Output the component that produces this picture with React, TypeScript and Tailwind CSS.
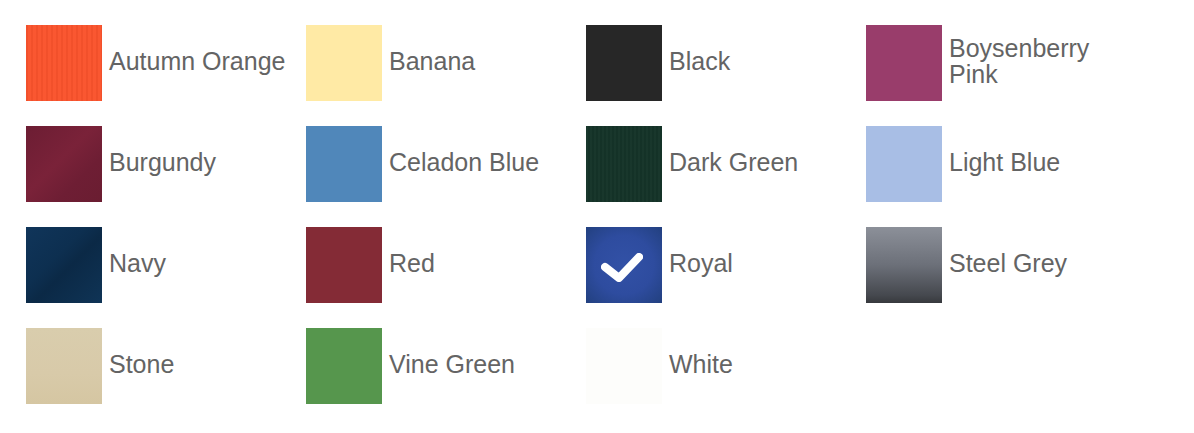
import React from 'react';

type Swatch = {
  name: string;
  swatch: string;
  selected?: boolean;
};

// 色見本: 画像の代わりに色とグラデーションで質感を出す
const colors: Swatch[] = [
  {
    name: 'Autumn Orange',
    swatch:
      'bg-[#fa532c] bg-[repeating-linear-gradient(90deg,rgba(0,0,0,0.03)_0px,rgba(0,0,0,0.03)_2px,rgba(255,255,255,0.025)_2px,rgba(255,255,255,0.025)_5px)]',
  },
  { name: 'Banana', swatch: 'bg-[#ffeaa5]' },
  { name: 'Black', swatch: 'bg-[#272727]' },
  { name: 'Boysenberry Pink', swatch: 'bg-[#993d6b]' },
  {
    name: 'Burgundy',
    swatch: 'bg-[linear-gradient(135deg,#6c1d33_0%,#7a2239_45%,#6e1e34_70%,#6a1d31_100%)]',
  },
  { name: 'Celadon Blue', swatch: 'bg-[#5087ba]' },
  {
    name: 'Dark Green',
    swatch:
      'bg-[#153429] bg-[repeating-linear-gradient(90deg,rgba(255,255,255,0.015)_0px,rgba(255,255,255,0.015)_2px,rgba(0,0,0,0.04)_2px,rgba(0,0,0,0.04)_4px)]',
  },
  { name: 'Light Blue', swatch: 'bg-[#a8bee5]' },
  {
    name: 'Navy',
    swatch: 'bg-[linear-gradient(135deg,#10355a_0%,#0d2f50_40%,#0b2946_55%,#0f3456_100%)]',
  },
  { name: 'Red', swatch: 'bg-[#842b36]' },
  {
    name: 'Royal',
    swatch:
      'bg-[radial-gradient(ellipse_at_center,#3251a6_0%,#2e4c9f_55%,#22407f_100%)]',
    selected: true,
  },
  {
    name: 'Steel Grey',
    swatch: 'bg-[linear-gradient(180deg,#8c9099_0%,#6c7079_50%,#45484e_90%,#37393d_100%)]',
  },
  {
    name: 'Stone',
    swatch: 'bg-[linear-gradient(180deg,#d9cdad_0%,#d8caa9_60%,#d5c6a2_100%)]',
  },
  { name: 'Vine Green', swatch: 'bg-[#56964d]' },
  { name: 'White', swatch: 'bg-[#fdfdfb]' },
];

function CheckMark() {
  return (
    <svg className="absolute inset-0" width="76" height="76" viewBox="0 0 76 76">
      <polyline
        points="19,40 33,51 53,30"
        fill="none"
        stroke="#ffffff"
        strokeWidth="8"
        strokeLinecap="round"
        strokeLinejoin="round"
        style={{ filter: 'blur(0.7px)' }}
      />
    </svg>
  );
}

function ColorOption({ color }: { color: Swatch }) {
  return (
    <div className="flex h-[101px] items-start">
      <div className="flex items-center">
        <div className={`relative h-[76px] w-[76px] shrink-0 ${color.swatch}`}>
          {color.selected && <CheckMark />}
        </div>
        <span className="ml-[7px] w-[185px] pb-[5px] text-[25px] leading-[26px] text-[#646464]">
          {color.name}
        </span>
      </div>
    </div>
  );
}

export default function App() {
  return (
    <div className="h-[433px] w-[1194px] bg-white pl-[26px] pt-[25px] font-['Liberation_Sans',Arial,sans-serif]">
      <div className="grid grid-cols-[repeat(4,280px)]">
        {colors.map((c) => (
          <ColorOption key={c.name} color={c} />
        ))}
      </div>
    </div>
  );
}
